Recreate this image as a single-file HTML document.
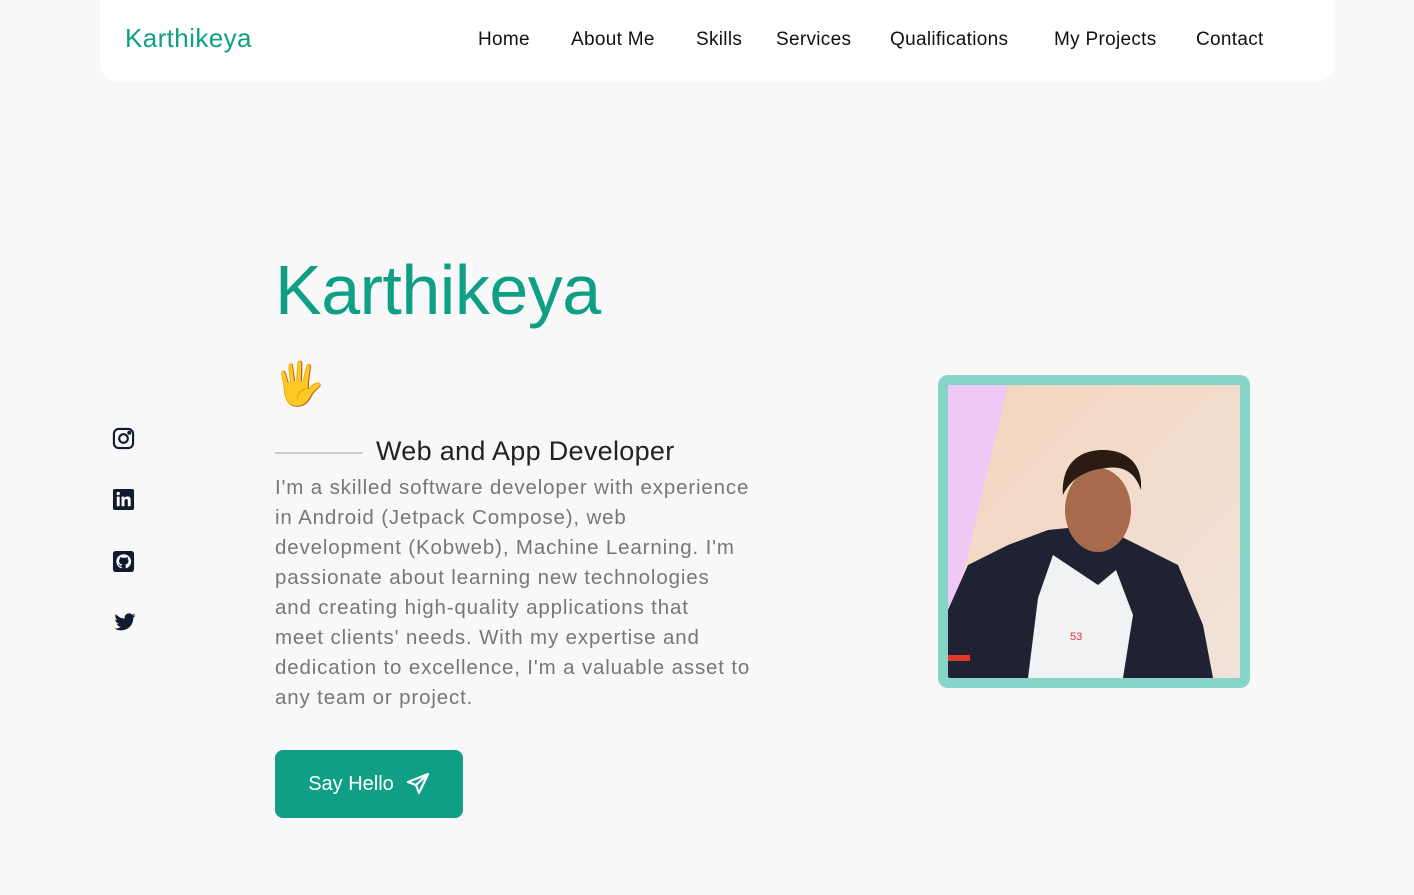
<!DOCTYPE html>
<html><head><meta charset="utf-8"><style>
*{margin:0;padding:0;box-sizing:border-box}
body{width:1414px;height:895px;background:#f8f8f8;font-family:"Liberation Sans",sans-serif;position:relative;overflow:hidden}
.nav{position:absolute;left:100px;top:-20px;width:1235px;height:102px;background:#fff;border-radius:20px}
.logo{position:absolute;left:125px;top:23px;font-size:26px;color:#0e9f85;letter-spacing:0.4px}
.links{position:absolute;top:29px;font-size:19px;color:#111;letter-spacing:0.3px}
.links span{position:absolute;white-space:nowrap}
h1{position:absolute;left:275px;top:250px;font-size:70px;font-weight:normal;color:#0e9f85;letter-spacing:-0.5px}
.line{position:absolute;left:275px;top:452px;width:88px;height:2px;background:#ccc}
.role{position:absolute;left:376px;top:436px;font-size:27px;color:#222;letter-spacing:0.3px}
.desc{position:absolute;left:275px;top:473px;font-size:20.5px;line-height:30px;color:#777;white-space:nowrap;letter-spacing:0.85px}
.btn{position:absolute;left:275px;top:750px;width:188px;height:68px;background:#0e9f85;border-radius:8px;color:#fff;font-size:20px;display:flex;align-items:center;justify-content:center;gap:12px}
.frame{position:absolute;left:938px;top:375px;width:312px;height:313px;background:#87d4c8;border-radius:10px;padding:10px}
.ic{position:absolute;left:112px}
</style></head><body>
<div class="nav"></div>
<div class="logo">Karthikeya</div>
<div class="links">
<span style="left:478px">Home</span><span style="left:571px">About Me</span><span style="left:696px">Skills</span><span style="left:776px">Services</span><span style="left:890px">Qualifications</span><span style="left:1054px">My Projects</span><span style="left:1196px">Contact</span></div>
<h1>Karthikeya</h1>
<div style="position:absolute;left:273px;top:360px;font-size:42px;font-family:'Noto Color Emoji',sans-serif;color:#fcc21b">🖐</div>
<div class="line"></div>
<div class="role">Web and App Developer</div>
<div class="desc">I'm a skilled software developer with experience<br>in Android (Jetpack Compose), web<br>development (Kobweb), Machine Learning. I'm<br>passionate about learning new technologies<br>and creating high-quality applications that<br>meet clients' needs. With my expertise and<br>dedication to excellence, I'm a valuable asset to<br>any team or project.</div>
<div class="btn">Say Hello <svg width="24" height="24" viewBox="0 0 24 24" fill="none" stroke="#fff" stroke-width="2.2" stroke-linejoin="round"><path d="M22 2 2 10l8 3 3 8z M22 2 10 13"/></svg></div>
<svg class="ic" style="top:427px" width="23" height="23" viewBox="0 0 24 24" fill="none" stroke="#111a2e" stroke-width="2.2"><rect x="2" y="2" width="20" height="20" rx="5"/><circle cx="12" cy="12" r="4.5"/><circle cx="18" cy="6" r="1" fill="#111a2e"/></svg>
<svg class="ic" style="top:488px" width="23" height="23" viewBox="0 0 24 24"><rect x="1" y="1" width="22" height="22" rx="2" fill="#111a2e"/><rect x="5" y="9" width="3" height="10" fill="#fff"/><circle cx="6.5" cy="5.8" r="1.8" fill="#fff"/><path d="M10 9h3v1.5c.7-1.2 2-1.8 3.3-1.8 2.4 0 3.2 1.6 3.2 4V19h-3v-5.5c0-1.3-.4-2-1.5-2s-2 .8-2 2.2V19h-3z" fill="#fff"/></svg>
<svg class="ic" style="top:550px" width="23" height="23" viewBox="0 0 24 24"><rect x="1" y="1" width="22" height="22" rx="3" fill="#111a2e"/><path d="M12 4.5a7.5 7.5 0 0 0-2.4 14.6c.4.1.5-.2.5-.4v-1.4c-2.1.5-2.5-1-2.5-1-.3-.9-.8-1.1-.8-1.1-.7-.5.1-.5.1-.5.8.1 1.2.8 1.2.8.7 1.2 1.8.8 2.2.6.1-.5.3-.8.5-1-1.7-.2-3.4-.8-3.4-3.7 0-.8.3-1.5.8-2-.1-.2-.3-1 .1-2 0 0 .6-.2 2.1.8a7 7 0 0 1 3.8 0c1.4-1 2.1-.8 2.1-.8.4 1 .2 1.8.1 2 .5.5.8 1.2.8 2 0 2.9-1.8 3.5-3.4 3.7.3.2.5.7.5 1.4v2.2c0 .2.1.5.5.4A7.5 7.5 0 0 0 12 4.5z" fill="#fff"/></svg>
<svg class="ic" style="top:611px" width="26" height="23" viewBox="0 0 24 24"><path fill="#111a2e" d="M23 4.6a9 9 0 0 1-2.6.7 4.5 4.5 0 0 0 2-2.5 9 9 0 0 1-2.9 1.1 4.5 4.5 0 0 0-7.7 4.1A12.8 12.8 0 0 1 2.5 3.3a4.5 4.5 0 0 0 1.4 6 4.5 4.5 0 0 1-2-.6 4.5 4.5 0 0 0 3.6 4.5 4.5 4.5 0 0 1-2 .1 4.5 4.5 0 0 0 4.2 3.1A9 9 0 0 1 1 18.2a12.8 12.8 0 0 0 19.7-11.4A9 9 0 0 0 23 4.6z"/></svg>
<div class="frame"><svg width="292" height="293" viewBox="0 0 292 293" style="display:block;border-radius:2px">
<defs><linearGradient id="g" x1="0" y1="0" x2="1" y2="1"><stop offset="0" stop-color="#f4d5bd"/><stop offset="1" stop-color="#f1e3da"/></linearGradient></defs>
<rect width="292" height="293" fill="url(#g)"/>
<path d="M0 0h60L8 220 0 240z" fill="#efc8f5"/>
<path d="M0 225 L20 180 60 160 100 145 150 140 190 160 230 180 255 240 265 293H0z" fill="#1f2232"/>
<path d="M105 170 L150 200 168 185 185 230 175 293H80l10-80z" fill="#f0f2f4"/>
<ellipse cx="150" cy="125" rx="33" ry="42" fill="#a86a4c"/>
<path d="M115 110c-2-30 15-45 40-45s40 15 38 40c-5-15-15-25-35-22-20 2-35 10-43 27z" fill="#2a1a14"/>
<text x="122" y="255" font-size="11" fill="#e03030" font-family="Liberation Sans">53</text>
<rect x="0" y="270" width="22" height="6" fill="#e23a2a"/>
</svg></div>
</body></html>
